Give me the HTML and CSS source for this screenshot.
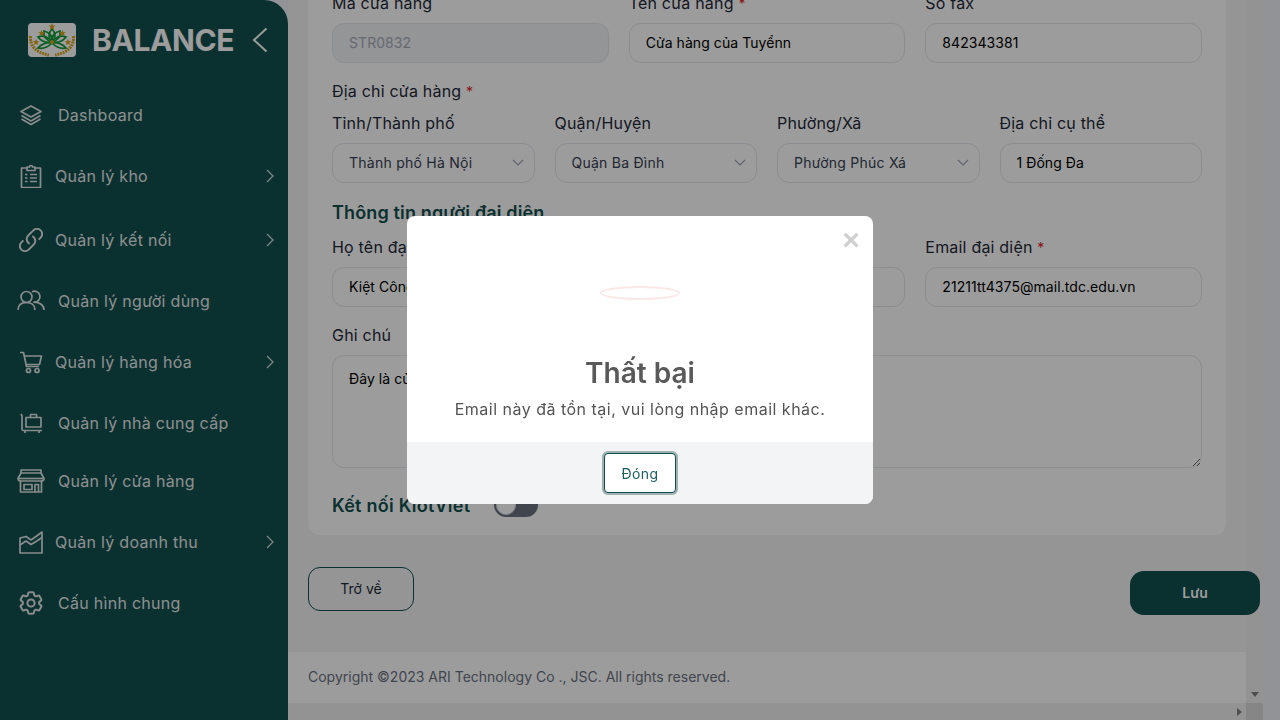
FILE: index.html
```html
<!DOCTYPE html>
<html lang="vi">
<head>
    <meta charset="UTF-8">
    <meta name="viewport" content="width=device-width, initial-scale=1.0">
    <title>Cập nhật cửa hàng</title>
    <link rel="stylesheet" href="styles.css">
</head>
<body>
    <div class="app">
        <!-- Menu bên trái -->
        <aside class="sidebar">
            <div class="brand">
                <svg class="logo" viewBox="0 0 48 34">
                    <rect width="48" height="34" rx="4" fill="#fff"/>
                    <path d="M2.500 13c-1 10 6 17 18.500 19M45.500 13c1 10-6 17-18.500 19" fill="none" stroke="#d9a520" stroke-width="3" stroke-dasharray="2 .8"/>
                    <g fill="none" stroke="#0f9a38" stroke-width="1.700">
                        <path d="M24 19c-4-4-4-9 0-13c4 4 4 9 0 13z"/>
                        <path d="M24 19c-6-2-9-6-8-11c5 1 9 5 8 11z"/>
                        <path d="M24 19c6-2 9-6 8-11c-5 1-9 5-8 11z"/>
                        <path d="M24 19c-6 1-11-1-14-5c5-2 11 0 14 5z"/>
                        <path d="M24 19c6 1 11-1 14-5c-5-2-11 0-14 5z"/>
                        <path d="M24 20c-4 4-9 6-14 5c3-4 9-6 14-5zM24 20c4 4 9 6 14 5c-3-4-9-6-14-5z"/>
                    </g>
                    <circle cx="24" cy="19" r="2" fill="#d9a520"/>
                    <g fill="#d9a520">
                        <path d="M24 0l1 2.400 2.500.2-1.900 1.600.6 2.500-2.200-1.300-2.200 1.300.6-2.500-1.900-1.600 2.500-.2z"/>
                        <path d="M13.500 7l.9 2.100 2.300.2-1.700 1.500.5 2.200-2-1.200-2 1.200.5-2.200-1.700-1.500 2.300-.2z"/>
                        <path d="M34.500 7l.9 2.100 2.300.2-1.700 1.500.5 2.200-2-1.200-2 1.200.5-2.200-1.700-1.500 2.300-.2z"/>
                        <path d="M8 16l.9 2.100 2.300.2-1.700 1.500.5 2.200-2-1.200-2 1.200.5-2.200-1.700-1.500 2.300-.2z"/>
                        <path d="M40 16l.9 2.100 2.300.2-1.700 1.500.5 2.200-2-1.200-2 1.200.5-2.200-1.700-1.500 2.300-.2z"/>
                    </g>
                </svg>
                <span class="brand-name">BALANCE</span>
                <svg class="collapse" viewBox="0 0 16 26" fill="none" stroke="currentColor" stroke-width="2"><path d="M14.500 1.500L2 13l12.500 11.500"/></svg>
            </div>

            <nav class="menu">
                <a class="menu-item wide" href="#">
                    <svg class="menu-icon" viewBox="0 0 24 24"><path d="M12 3l10 5.500L12 14 2 8.500z"/><path d="M2.500 12.500L12 18l9.500-5.500"/><path d="M2.500 16L12 21.500l9.500-5.500"/></svg>
                    <span>Dashboard</span>
                </a>
                <a class="menu-item" href="#">
                    <svg class="menu-icon" viewBox="0 0 24 24"><path d="M8 4H2.500v19.500h19V4H16"/><path d="M8 6.500V3h2.500a1.500 1.500 0 0 1 3 0H16v3.500z"/><path d="M6 10.500h2.500M11 10.500h7M6 14h2.500M11 14h7M6 17.500h2.500M11 17.500h7"/></svg>
                    <span>Quản lý kho</span>
                    <svg class="menu-arrow" viewBox="0 0 8 14"><path d="M1 1l6 6-6 6"/></svg>
                </a>
                <a class="menu-item shift-down" href="#">
                    <svg class="menu-icon" viewBox="1.500 1.500 21 21"><path d="M13.190 8.688a4.500 4.500 0 0 1 1.242 7.244l-4.500 4.500a4.500 4.500 0 0 1-6.364-6.364l1.757-1.757m13.350-.622 1.757-1.757a4.500 4.500 0 0 0-6.364-6.364l-4.500 4.500a4.500 4.500 0 0 0 1.242 7.244"/></svg>
                    <span>Quản lý kết nối</span>
                    <svg class="menu-arrow" viewBox="0 0 8 14"><path d="M1 1l6 6-6 6"/></svg>
                </a>
                <a class="menu-item wide icon-lg" href="#">
                    <svg class="menu-icon" viewBox="0 0 28 24"><circle cx="9.500" cy="8" r="5.500"/><path d="M1 21c0-5 3.500-7.500 8.500-7.500S18 16 18 21"/><path d="M15 2.800a5.500 5.500 0 1 1 2 10.400c5.500 0 10 2.800 10 7.800"/></svg>
                    <span>Quản lý người dùng</span>
                </a>
                <a class="menu-item" href="#">
                    <svg class="menu-icon" viewBox="0 0 24 24"><path d="M1 2.500h3.500l3 14h12.500"/><path d="M5 6h17.500l-2 8.500H7"/><circle cx="9.500" cy="20.500" r="2"/><circle cx="18" cy="20.500" r="2"/></svg>
                    <span>Quản lý hàng hóa</span>
                    <svg class="menu-arrow" viewBox="0 0 8 14"><path d="M1 1l6 6-6 6"/></svg>
                </a>
                <a class="menu-item wide" href="#">
                    <svg class="menu-icon" viewBox="0 0 24 24"><path d="M2 3l1 2v13c0 1 .5 1.500 1.500 1.500H23"/><path d="M7 6.500h15v9.500H7z"/><path d="M11.500 6.500V3.500h6v3"/><path d="M6 19.500v2.500M20 19.500v2.500"/></svg>
                    <span>Quản lý nhà cung cấp</span>
                </a>
                <a class="menu-item wide icon-lg shift-up" href="#">
                    <svg class="menu-icon" viewBox="0 0 28 24"><path d="M4 1h20v3H4zM4 4L1 9.500c0 2 2 2.500 3 2.500h20c1 0 3-.5 3-2.500L24 4"/><path d="M1 9.500h26"/><path d="M3.500 12v11h21V12"/><path d="M7 15.500h8v5H7zM18 23v-7.500h3.500V23"/></svg>
                    <span>Quản lý cửa hàng</span>
                </a>
                <a class="menu-item" href="#">
                    <svg class="menu-icon" viewBox="0 0 24 24"><path d="M1 8v15h22V2l-6 4.500L12 10 7 6.500z"/><path d="M1 15l6-4 5 3.500 5-3 6-4"/></svg>
                    <span>Quản lý doanh thu</span>
                    <svg class="menu-arrow" viewBox="0 0 8 14"><path d="M1 1l6 6-6 6"/></svg>
                </a>
                <a class="menu-item wide" href="#">
                    <svg class="menu-icon" viewBox="2 2 20 20"><path d="M9.594 3.940c.09-.542.56-.94 1.110-.94h2.593c.55 0 1.020.398 1.110.94l.213 1.281c.063.374.313.686.645.870.074.040.147.083.22.127.325.196.72.257 1.075.124l1.217-.456a1.125 1.125 0 0 1 1.370.49l1.296 2.247a1.125 1.125 0 0 1-.26 1.431l-1.003.827c-.293.241-.438.613-.43.992a7.723 7.723 0 0 1 0 .255c-.008.378.137.75.43.991l1.004.827c.424.35.534.955.26 1.430l-1.298 2.247a1.125 1.125 0 0 1-1.369.491l-1.217-.456c-.355-.133-.75-.072-1.076.124a6.470 6.470 0 0 1-.22.128c-.331.183-.581.495-.644.869l-.213 1.281c-.09.543-.56.94-1.110.94h-2.594c-.55 0-1.019-.398-1.110-.94l-.213-1.281c-.062-.374-.312-.686-.644-.87a6.520 6.520 0 0 1-.22-.127c-.325-.196-.72-.257-1.076-.124l-1.217.456a1.125 1.125 0 0 1-1.369-.49l-1.297-2.247a1.125 1.125 0 0 1 .26-1.431l1.004-.827c.292-.24.437-.613.43-.991a6.932 6.932 0 0 1 0-.255c.007-.38-.138-.751-.43-.992l-1.004-.827a1.125 1.125 0 0 1-.26-1.430l1.297-2.247a1.125 1.125 0 0 1 1.370-.491l1.216.456c.356.133.751.072 1.076-.124.072-.044.146-.086.22-.128.332-.183.582-.495.644-.869l.214-1.280z"/><circle cx="12" cy="12" r="3"/></svg>
                    <span>Cấu hình chung</span>
                </a>
            </nav>
        </aside>

        <main class="main">
            <div class="main-body">
                <div class="content">
                    <form class="card">
                        <div class="grid-3">
                            <div class="field">
                                <label>Mã cửa hàng</label>
                                <input class="input disabled" type="text" value="STR0832" disabled>
                            </div>
                            <div class="field">
                                <label>Tên cửa hàng <em>*</em></label>
                                <input class="input" type="text" value="Cửa hàng của Tuyểnn">
                            </div>
                            <div class="field">
                                <label>Số fax</label>
                                <input class="input" type="text" value="842343381">
                            </div>
                        </div>

                        <div class="group-label">Địa chỉ cửa hàng <em>*</em></div>
                        <div class="grid-4">
                            <div class="field">
                                <label>Tỉnh/Thành phố</label>
                                <div class="select">Thành phố Hà Nội<svg viewBox="0 0 12 7"><path d="M1 1l5 5 5-5"/></svg></div>
                            </div>
                            <div class="field">
                                <label>Quận/Huyện</label>
                                <div class="select">Quận Ba Đình<svg viewBox="0 0 12 7"><path d="M1 1l5 5 5-5"/></svg></div>
                            </div>
                            <div class="field">
                                <label>Phường/Xã</label>
                                <div class="select">Phường Phúc Xá<svg viewBox="0 0 12 7"><path d="M1 1l5 5 5-5"/></svg></div>
                            </div>
                            <div class="field">
                                <label>Địa chỉ cụ thể</label>
                                <input class="input" type="text" value="1 Đống Đa">
                            </div>
                        </div>

                        <h2 class="section-title">Thông tin người đại diện</h2>
                        <div class="grid-3">
                            <div class="field">
                                <label>Họ tên đại diện <em>*</em></label>
                                <input class="input" type="text" value="Kiệt Công">
                            </div>
                            <div class="field">
                                <label>Số điện thoại <em>*</em></label>
                                <input class="input" type="text">
                            </div>
                            <div class="field">
                                <label>Email đại diện <em>*</em></label>
                                <input class="input" type="text" value="21211tt4375@mail.tdc.edu.vn">
                            </div>
                        </div>

                        <div class="field note">
                            <label>Ghi chú</label>
                            <textarea class="input textarea">Đây là cửa hàng</textarea>
                        </div>

                        <div class="kiotviet">
                            <h2 class="section-title flat">Kết nối KiotViet</h2>
                            <span class="toggle"><span class="knob"></span></span>
                        </div>
                    </form>

                    <div class="actions">
                        <button type="button" class="btn-back">Trở về</button>
                        <button type="button" class="btn-save">Lưu</button>
                    </div>

                    <footer class="footer">Copyright ©2023 ARI Technology Co ., JSC. All rights reserved.</footer>
                </div>
                <div class="scroll-v"><span class="arrow-down"></span></div>
            </div>
            <div class="scroll-h">
                <span class="arrow-right"></span>
                <span class="scroll-corner"></span>
            </div>
        </main>
    </div>

    <!-- Hộp thoại báo lỗi -->
    <div class="overlay">
        <div class="modal">
            <button type="button" class="modal-close">×</button>
            <div class="modal-body">
                <div class="error-icon"></div>
                <h3 class="modal-title">Thất bại</h3>
                <p class="modal-text">Email này đã tồn tại, vui lòng nhập email khác.</p>
            </div>
            <div class="modal-footer">
                <button type="button" class="btn-close">Đóng</button>
            </div>
        </div>
    </div>
</body>
</html>
```

FILE: styles.css
```css
* {
    box-sizing: border-box;
}
html, body {
    height: 100%;
}
body {
    margin: 0;
    overflow: hidden;
    font-family: Inter, "Noto Sans", sans-serif;
    font-size: 16px;
    color: #374151;
    background-color: #eef1f6;
}
.app {
    display: flex;
    height: 720px;
}

/* Sidebar */
.sidebar {
    flex: 0 0 288px;
    background-color: #124f4f;
    border-top-right-radius: 24px;
}
.brand {
    display: flex;
    align-items: center;
    height: 80px;
    padding-left: 28px;
}
.logo {
    width: 48px;
    height: 34px;
}
.brand-name {
    margin-left: 16px;
    font-size: 30px;
    font-weight: 700;
    color: #fff;
    letter-spacing: -.4px;
}
.collapse {
    width: 16px;
    height: 26px;
    margin-left: 18px;
    color: #fff;
}
.menu {
    padding-top: 4px;
}
.menu-item {
    display: flex;
    align-items: center;
    height: 61px;
    padding-left: 19px;
    color: #e4eaea;
    text-decoration: none;
    font-size: 16px;
    letter-spacing: .28px;
}
.shift-down {
    margin-top: 3px;
}
.shift-up {
    margin-top: -3px;
}
.menu-icon {
    flex: none;
    width: 24px;
    height: 24px;
    margin-right: 12px;
    fill: none;
    stroke: #dfe5e5;
    stroke-width: 1.700;
    stroke-linejoin: round;
}
.wide .menu-icon {
    margin-right: 15px;
}
.icon-lg .menu-icon {
    width: 28px;
    margin-left: -2px;
    margin-right: 13px;
}
.menu-arrow {
    width: 8px;
    height: 14px;
    margin-left: auto;
    margin-right: 14px;
    fill: none;
    stroke: #d5dcdc;
    stroke-width: 1.200;
}

/* Main */
.main {
    flex: 0 0 975px;
    display: flex;
    flex-direction: column;
    background-color: #f3f4f6;
}
.main-body {
    flex: 1;
    display: flex;
    min-height: 0;
}
.content {
    flex: 1;
    min-width: 0;
    display: flex;
    flex-direction: column;
}
.card {
    margin: -33px 20px 0;
    padding: 24px 24px 16px;
    background: #fff;
    border-radius: 12px;
}
.grid-3 {
    display: grid;
    grid-template-columns: repeat(3, 1fr);
    gap: 20px;
}
.grid-4 {
    display: grid;
    grid-template-columns: repeat(4, 1fr);
    gap: 20px;
}
.field label {
    display: block;
    line-height: 24px;
    margin-bottom: 8px;
    color: #1f2937;
    letter-spacing: .2px;
}
em {
    font-style: normal;
    font-size: 14px;
    line-height: 1;
    color: #e02424;
}
.input, .select {
    display: block;
    width: 100%;
    height: 40px;
    padding: 0 16px 2px;
    border: 1px solid #e5e7eb;
    border-radius: 12px;
    background: #fff;
    font-family: inherit;
    font-size: 14px;
    letter-spacing: .06px;
    color: #000;
}
.disabled {
    background-color: #f1f3f7;
    color: #a7adb8;
}
.select {
    display: flex;
    align-items: center;
    justify-content: space-between;
    color: #374151;
    letter-spacing: .25px;
}
.select svg {
    width: 12px;
    height: 7px;
    margin-right: -6px;
    fill: none;
    stroke: #9ca3af;
    stroke-width: 1.200;
}
.group-label {
    margin: 16px 0 8px;
    line-height: 24px;
    color: #1f2937;
    letter-spacing: .2px;
}
.section-title {
    margin: 16px 0 8px;
    font-size: 18px;
    line-height: 28px;
    font-weight: 600;
    letter-spacing: .15px;
    color: #124f4f;
}
.note {
    margin-top: 16px;
}
.textarea {
    height: 113px;
    padding-top: 14px;
    resize: vertical;
}
.kiotviet {
    display: flex;
    align-items: center;
    margin-top: 23px;
    height: 28px;
}
.flat {
    margin: 0;
    width: 162px;
    padding-top: 2px;
    letter-spacing: .25px;
}
.toggle {
    display: flex;
    align-items: center;
    width: 44px;
    height: 24px;
    padding: 2px;
    border-radius: 12px;
    background-color: #6b7280;
}
.knob {
    width: 20px;
    height: 20px;
    border-radius: 50%;
    background: #fff;
    border: 1px solid #d1d5db;
}
.actions {
    display: flex;
    justify-content: space-between;
    align-items: flex-start;
    margin: 32px -14px 0 20px;
    height: 85px;
    position: relative;
    z-index: 1;
}
.btn-back {
    width: 106px;
    height: 44px;
    padding-bottom: 3px;
    border: 1px solid #124f4f;
    border-radius: 12px;
    background: transparent;
    font-family: inherit;
    font-size: 14px;
    color: #1f2937;
}
.btn-save {
    width: 130px;
    height: 44px;
    margin-top: 4px;
    padding-bottom: 2px;
    border: none;
    border-radius: 14px;
    background-color: #124f4f;
    font-family: inherit;
    font-size: 14px;
    font-weight: 600;
    color: #fff;
}
.footer {
    flex: 1;
    display: flex;
    align-items: center;
    padding: 0 0 2px 20px;
    background: #fff;
    font-size: 14px;
    color: #6b7280;
}

/* Thanh cuộn */
.scroll-v {
    flex: 0 0 17px;
    display: flex;
    flex-direction: column;
    justify-content: flex-end;
    align-items: center;
    padding-bottom: 6px;
    background-color: #f1f1f1;
}
.arrow-down {
    border: 4px solid transparent;
    border-top: 5px solid #808080;
    border-bottom: 0;
}
.scroll-h {
    flex: 0 0 17px;
    display: flex;
    justify-content: flex-end;
    align-items: center;
    background-color: #f1f1f1;
}
.arrow-right {
    border: 4px solid transparent;
    border-left: 5px solid #808080;
    border-right: 0;
    margin-right: 4px;
}
.scroll-corner {
    width: 17px;
    height: 17px;
    background-color: #dcdcdc;
}

/* Modal */
.overlay {
    position: fixed;
    inset: 0;
    z-index: 10;
    display: flex;
    align-items: center;
    justify-content: center;
    background-color: rgba(0, 0, 0, .39);
}
.modal {
    position: relative;
    width: 466px;
    height: 288px;
    display: flex;
    flex-direction: column;
    border-radius: 8px;
    overflow: hidden;
    background: #fff;
}
.modal-close {
    position: absolute;
    top: 6px;
    right: 8px;
    padding: 0;
    width: 28px;
    height: 36px;
    border: none;
    background: none;
    font-family: "Liberation Sans", sans-serif;
    font-size: 30px;
    font-weight: 700;
    line-height: 36px;
    color: #cfcfcf;
}
.modal-body {
    flex: 1;
    display: flex;
    flex-direction: column;
    align-items: center;
}
.error-icon {
    width: 80px;
    height: 14px;
    margin-top: 70px;
    border: 2px solid #fbe7e7;
    border-radius: 50%;
}
.modal-title {
    margin: 53px 0 0;
    font-size: 28px;
    line-height: 40px;
    font-weight: 600;
    color: #595959;
}
.modal-text {
    margin: 4px 0 0;
    font-size: 16px;
    line-height: 24px;
    letter-spacing: .49px;
    color: #545454;
}
.modal-footer {
    flex: 0 0 62px;
    display: flex;
    align-items: center;
    justify-content: center;
    background-color: #f3f4f6;
}
.btn-close {
    width: 72px;
    height: 40px;
    border: 1px solid #124f4f;
    border-radius: 4px;
    background: #fff;
    box-shadow: 0 0 0 2px #9fb0b3;
    font-family: inherit;
    font-size: 14px;
    letter-spacing: .4px;
    color: #1d5f5f;
}
```
